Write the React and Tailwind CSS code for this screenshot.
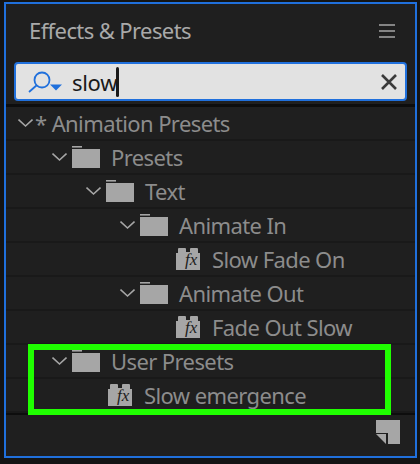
const font = { fontFamily: '"Noto Sans", "Open Sans", sans-serif' };

function Chevron() {
  return (
    <svg width="15" height="10" viewBox="0 0 15 10" className="shrink-0">
      <path d="M0.5 1.5 L7.5 8 L14.5 1.5" fill="none" stroke="#a6a6a6" strokeWidth="1.6" />
    </svg>
  );
}

function Folder() {
  return (
    <svg width="28" height="22" viewBox="0 0 28 22" className="shrink-0">
      <rect x="0" y="0" width="10" height="1.6" fill="#a6a6a6" />
      <rect x="0" y="3" width="28" height="19" fill="#a6a6a6" />
    </svg>
  );
}

function Fx() {
  return (
    <div className="relative w-6 h-[22px] shrink-0">
      <svg width="24" height="22" viewBox="0 0 24 22" className="absolute inset-0">
        <path d="M0 5 L2 5 L2 1 Q2 0 3 0 L9 0 Q10 0 10 1 L10 4 L14 4 L14 1 Q14 0 15 0 L21 0 Q22 0 22 1 L22 5 L24 5 L24 22 L0 22 Z" fill="#a6a6a6" />
      </svg>
      <span className="absolute left-[9px] top-[1px] text-[17px] leading-[22px] italic text-[#1d1d1d]" style={{ fontFamily: '"Liberation Serif", serif' }}>fx</span>
    </div>
  );
}

function Row({ pad, icon, label, chevron = true, gap = 'ml-[11px]', color = 'text-[#8c8c8c]' }) {
  return (
    <div className="h-[34px] flex items-center border-b-2 border-[#191919]" style={{ paddingLeft: pad }}>
      {chevron && <div className="mr-[5px] flex"><Chevron /></div>}
      {icon}
      <span className={`${gap} text-[22px] leading-none whitespace-nowrap tracking-[-0.6px] ${color}`}>{label}</span>
    </div>
  );
}

export default function App() {
  return (
    <div className="w-[420px] h-[464px] bg-[#141414] relative overflow-hidden" style={font}>
      <div className="absolute left-[4px] top-[2px] w-[413px] h-[456px] border-2 border-[#2070dc] bg-[#1f1f1f] flex flex-col">
        <div className="h-[48px] pl-[23px] pr-[20px] pt-[4px] flex items-center justify-between shrink-0">
          <span className="text-[22px] leading-none tracking-[-0.6px] text-[#a9a9a9]">Effects &amp; Presets</span>
          <svg width="16" height="14" viewBox="0 0 16 14" className="mt-[2px]">
            <path d="M0 1 H16 M0 7 H16 M0 13 H16" stroke="#a6a6a6" strokeWidth="1.6" />
          </svg>
        </div>
        <div className="mx-[8px] h-[39px] mt-[10px] rounded-[4px] border-2 border-[#2070dc] bg-[#e2e2e2] flex items-center shrink-0">
          <svg width="36" height="30" viewBox="0 0 36 30" className="ml-[12px] shrink-0">
            <circle cx="14" cy="13" r="7.5" fill="none" stroke="#2070dc" strokeWidth="1.8" />
            <path d="M8.7 18.3 L1 25" stroke="#2070dc" strokeWidth="1.8" />
            <path d="M22 17.5 H34 L28 23.5 Z" fill="#2070dc" />
          </svg>
          <span className="ml-[8px] text-[22px] leading-none tracking-[-0.3px] text-[#1a1a1a]">slow</span>
          <div className="w-[3px] h-[30px] rounded-sm bg-[#1a1a1a] -ml-[1px]" />
          <svg width="16" height="16" viewBox="0 0 16 16" className="ml-auto mr-[8px]">
            <path d="M1 1 L15 15 M15 1 L1 15" stroke="#3a3a3a" strokeWidth="2.6" />
          </svg>
        </div>
        <div className="mt-[3px] border-t-[3px] border-[#0d0d0d] shrink-0" />
        <div className="flex flex-col">
          <Row pad="12px" icon={null} label="* Animation Presets" gap="ml-[-3px]" />
          <Row pad="46px" icon={<Folder />} label="Presets" />
          <Row pad="80px" icon={<Folder />} label="Text" />
          <Row pad="114px" icon={<Folder />} label="Animate In" />
          <Row pad="170px" chevron={false} icon={<Fx />} label="Slow Fade On" gap="ml-[12px]" />
          <Row pad="114px" icon={<Folder />} label="Animate Out" />
          <Row pad="170px" chevron={false} icon={<Fx />} label="Fade Out Slow" gap="ml-[12px]" />
          <Row pad="46px" icon={<Folder />} label="User Presets" />
          <Row pad="102px" chevron={false} icon={<Fx />} label="Slow emergence" gap="ml-[12px]" />
        </div>
        <div className="border-t-2 border-[#0d0d0d] flex-1 flex justify-end pr-[15px] pt-[5px]">
          <svg width="24" height="24" viewBox="0 0 24 24">
            <path d="M0 0 H24 V24 H12 V13 H0 Z" fill="#a6a6a6" />
            <path d="M0 14 H10 V24 Z" fill="#a6a6a6" />
          </svg>
        </div>
      </div>
      <div className="absolute left-[28px] top-[344px] w-[363px] h-[71px] border-[6px] border-[#1fff00]" />
    </div>
  );
}
